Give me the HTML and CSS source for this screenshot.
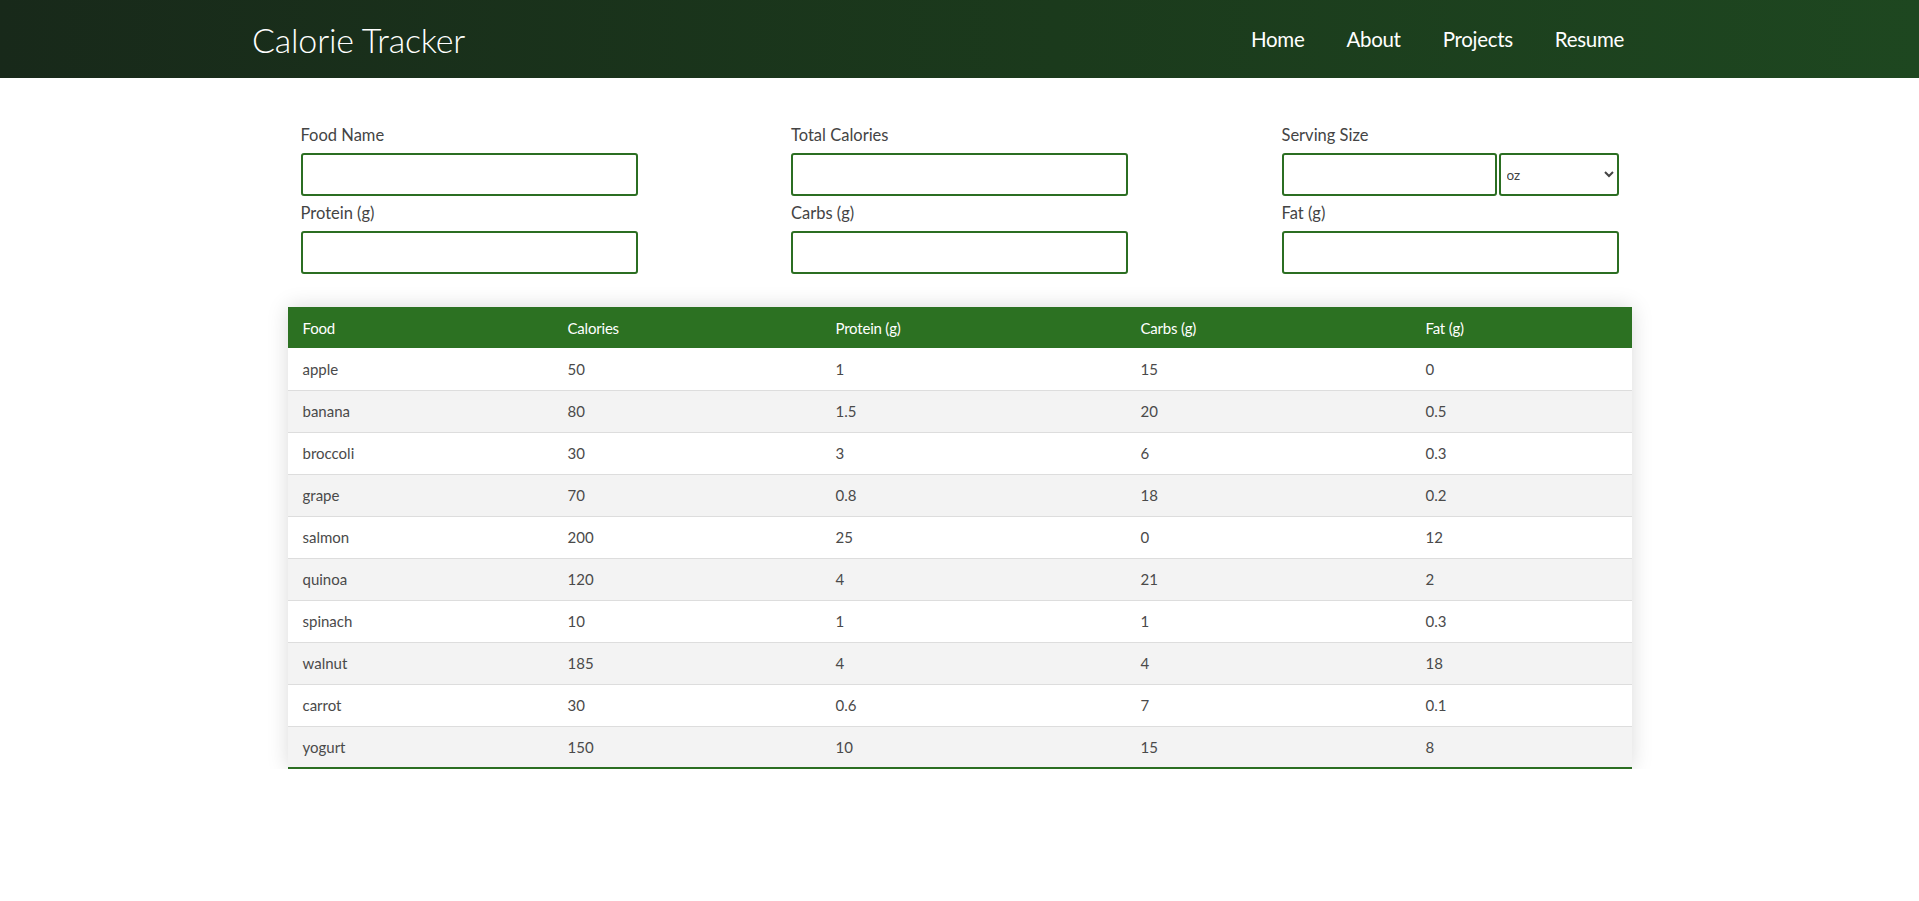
FILE: index.html
```html
<!DOCTYPE html>
<html lang="en">
<head>
<meta charset="utf-8">
<title>Calorie Tracker</title>
<link rel="stylesheet" href="styles.css">
</head>
<body>
<header class="topbar">
  <div class="brand">Calorie Tracker</div>
  <nav class="nav">
    <a href="#">Home</a>
    <a href="#">About</a>
    <a href="#">Projects</a>
    <a href="#">Resume</a>
  </nav>
</header>
<main class="main">
  <form class="form">
    <div class="field">
      <label>Food Name</label>
      <input type="text">
    </div>
    <div class="field">
      <label>Total Calories</label>
      <input type="text">
    </div>
    <div class="field">
      <label>Serving Size</label>
      <div class="serving">
        <input type="text" class="serving-input">
        <select class="unit"><option>oz</option><option>g</option></select>
      </div>
    </div>
    <div class="field">
      <label>Protein (g)</label>
      <input type="text">
    </div>
    <div class="field">
      <label>Carbs (g)</label>
      <input type="text">
    </div>
    <div class="field">
      <label>Fat (g)</label>
      <input type="text">
    </div>
  </form>
  <table class="foods">
    <colgroup>
      <col class="c1"><col class="c2"><col class="c3"><col class="c4"><col class="c5">
    </colgroup>
    <thead>
      <tr><th>Food</th><th>Calories</th><th>Protein (g)</th><th>Carbs (g)</th><th>Fat (g)</th></tr>
    </thead>
    <tbody>
      <tr><td>apple</td><td>50</td><td>1</td><td>15</td><td>0</td></tr>
      <tr><td>banana</td><td>80</td><td>1.5</td><td>20</td><td>0.5</td></tr>
      <tr><td>broccoli</td><td>30</td><td>3</td><td>6</td><td>0.3</td></tr>
      <tr><td>grape</td><td>70</td><td>0.8</td><td>18</td><td>0.2</td></tr>
      <tr><td>salmon</td><td>200</td><td>25</td><td>0</td><td>12</td></tr>
      <tr><td>quinoa</td><td>120</td><td>4</td><td>21</td><td>2</td></tr>
      <tr><td>spinach</td><td>10</td><td>1</td><td>1</td><td>0.3</td></tr>
      <tr><td>walnut</td><td>185</td><td>4</td><td>4</td><td>18</td></tr>
      <tr><td>carrot</td><td>30</td><td>0.6</td><td>7</td><td>0.1</td></tr>
      <tr><td>yogurt</td><td>150</td><td>10</td><td>15</td><td>8</td></tr>
    </tbody>
  </table>
</main>
</body>
</html>
```
FILE: styles.css
```css
* { box-sizing: border-box; }
html, body { margin: 0; padding: 0; }
body {
  font-family: Lato, "Open Sans", sans-serif;
  color: #444;
  background: #fff;
}
.topbar {
  height: 78px;
  display: flex;
  align-items: center;
  justify-content: space-between;
  padding: 0 295px 0 252px;
  background: linear-gradient(90deg, #18291a 0%, #1b3a1c 55%, #1e4720 100%);
}
.brand {
  color: #fff;
  font-size: 34px;
  font-weight: 300;
  letter-spacing: -0.2px;
}
.nav {
  display: flex;
  gap: 42px;
}
.nav a {
  color: #fff;
  text-decoration: none;
  font-size: 20.5px;
  font-weight: 400;
  letter-spacing: -0.3px;
}
.main {
  padding-top: 48px;
}
.form {
  width: 1318px;
  margin: 0 auto;
  display: grid;
  grid-template-columns: repeat(3, 337px);
  justify-content: space-between;
  row-gap: 8px;
}
.field {
  display: flex;
  flex-direction: column;
}
.field label {
  font-size: 16.5px;
  color: #444;
  height: 19px;
  line-height: 19px;
  margin-bottom: 8px;
}
.field input {
  height: 43px;
  width: 100%;
  border: 2px solid #2b6e22;
  border-radius: 3px;
  background: #fff;
  font-family: inherit;
  font-size: 14px;
  padding: 0 8px;
}
.serving {
  display: flex;
  gap: 2px;
}
.serving .serving-input {
  width: 215px;
  flex: none;
}
.unit {
  flex: 1;
  height: 43px;
  border: 2px solid #2b6e22;
  border-radius: 3px;
  background: #fff;
  font-family: inherit;
  font-size: 13.5px;
  color: #444;
  padding: 0 2px;
}
.foods {
  width: 1344px;
  margin: 33px auto 0;
  border-collapse: collapse;
  table-layout: fixed;
  box-shadow: 0 0 20px rgba(0, 0, 0, 0.15);
  border-bottom: 2px solid #2b6e22;
  font-size: 15px;
}
.c1 { width: 265px; }
.c2 { width: 268px; }
.c3 { width: 305px; }
.c4 { width: 285px; }
.c5 { width: 221px; }
.foods thead tr {
  background: #2c7122;
  height: 41px;
}
.foods th {
  color: #fff;
  font-weight: 400;
  text-align: left;
  padding: 0 15px;
  letter-spacing: -0.2px;
}
.foods td {
  height: 42px;
  padding: 0 15px;
  color: #4a4a4a;
  border-bottom: 1px solid #dddddd;
}
.foods tbody tr:nth-child(even) {
  background: #f3f3f3;
}
.foods tbody tr:last-child td {
  border-bottom: none;
}
```
